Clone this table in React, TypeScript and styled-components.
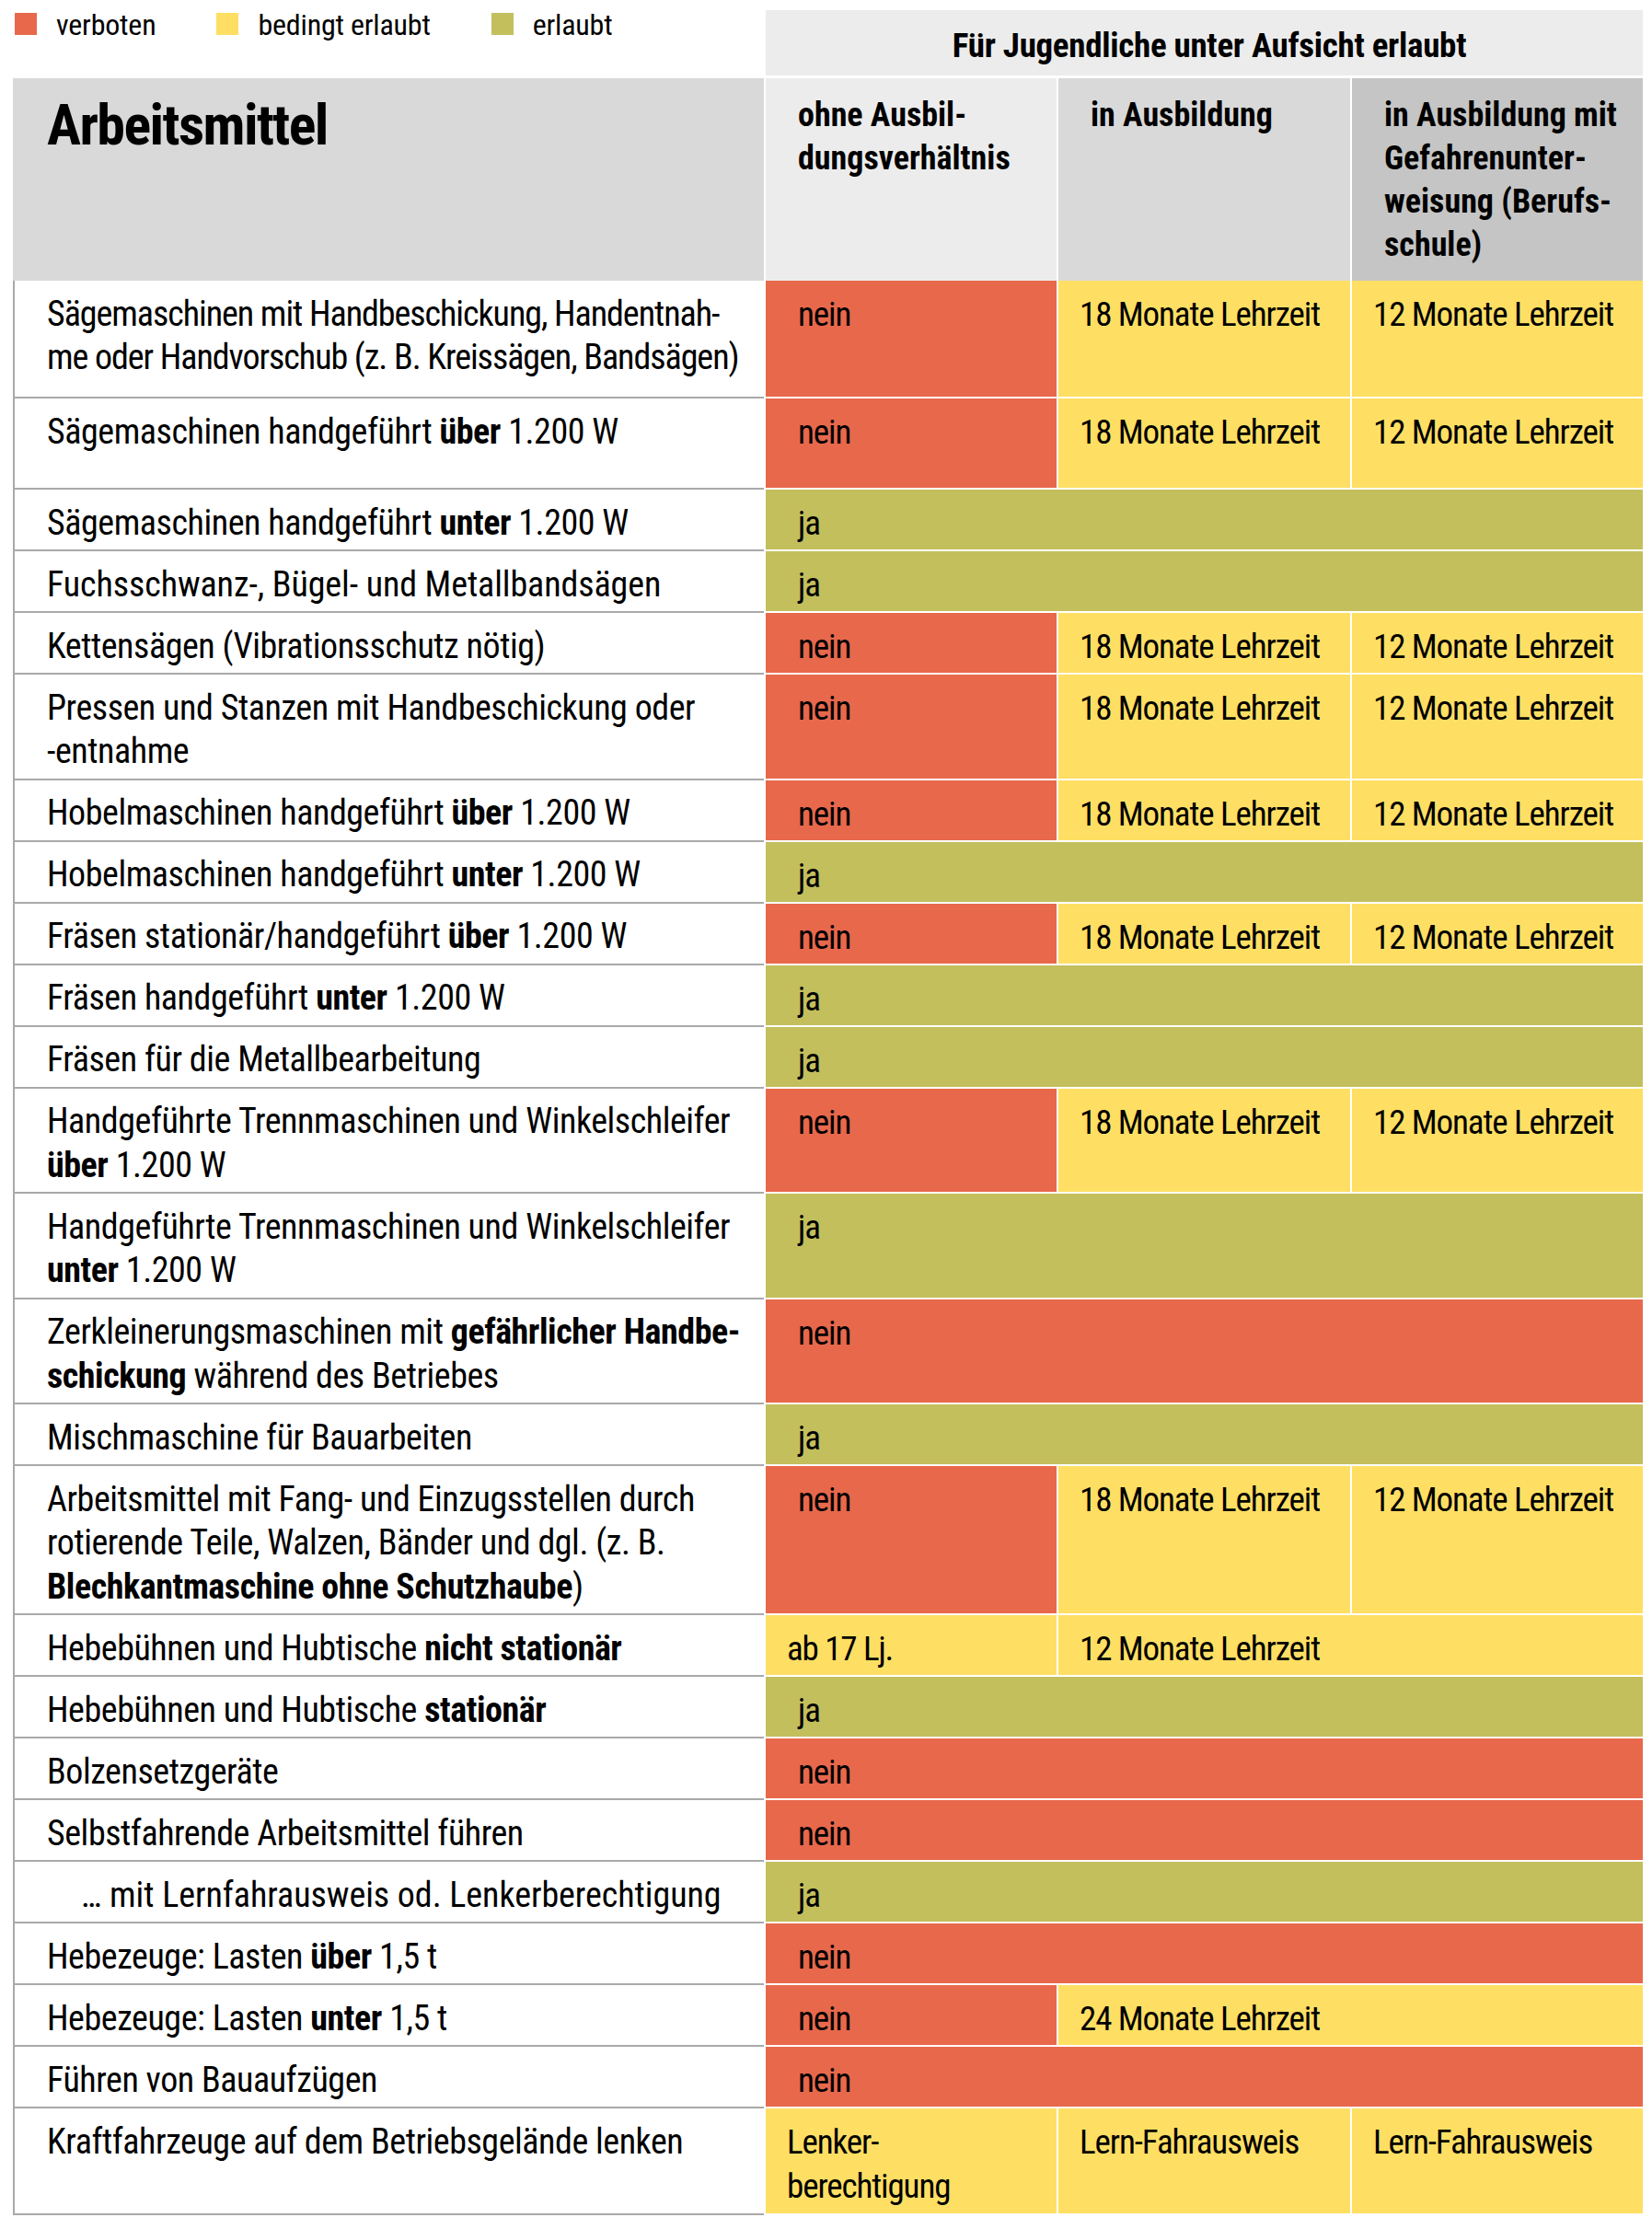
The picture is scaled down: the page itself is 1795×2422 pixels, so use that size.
import React from "react";
import styled, { createGlobalStyle } from "styled-components";

type Tone = "red" | "yellow" | "green";

const TONES: Record<Tone, string> = {
  red: "#E8684C",
  yellow: "#FFDF63",
  green: "#C3BF5D",
};

const FONT = `Roboto, "Roboto Condensed", "Liberation Sans", Arial, sans-serif`;

const GlobalStyle = createGlobalStyle`
  html, body { margin: 0; padding: 0; background: #ffffff; }
  body { font-family: ${FONT}; font-stretch: 75%; color: #000000; }
  * { box-sizing: border-box; }
`;

const COLS = "816px 316px 317px 316px";

const Page = styled.div`
  width: 1795px;
  padding: 11px 0 0 14px;
`;

const TopBar = styled.div`
  display: grid;
  grid-template-columns: ${COLS};
  column-gap: 2px;
  height: 71px;
`;

const Legend = styled.div`
  display: flex;
  align-items: flex-start;
  gap: 66px;
  padding: 0 0 0 2px;
`;

const LegendItem = styled.div`
  display: flex;
  align-items: baseline;
  gap: 21px;
  font-size: 32px;
  letter-spacing: -0.2px;
  line-height: 1;
`;

const Swatch = styled.span<{ $tone: Tone }>`
  flex: none;
  width: 24px;
  height: 24px;
  background: ${(p) => TONES[p.$tone]};
`;

const GroupHead = styled.div`
  grid-column: 2 / span 3;
  background: #ececec;
  text-align: center;
  padding: 17px 0 0 11px;
  font-size: 37px;
  letter-spacing: -0.3px;
  line-height: 43px;
  font-weight: 700;
`;

const HeadRow = styled.div`
  display: grid;
  grid-template-columns: ${COLS};
  column-gap: 2px;
  height: 220px;
  margin-top: 3px;
`;

const TitleCell = styled.div`
  background: #d9d9d9;
  padding: 15px 0 0 37px;
`;

const Title = styled.h1`
  margin: 0;
  font-size: 62px;
  letter-spacing: -1.6px;
  line-height: 72px;
  font-weight: 700;
`;

const HeadCell = styled.div<{ $shade: string }>`
  background: ${(p) => p.$shade};
  padding: 17px 12px 0 35px;
  font-size: 36px;
  line-height: 47px;
  font-weight: 700;
  white-space: nowrap;
`;

const Row = styled.div<{ $h?: number }>`
  display: grid;
  grid-template-columns: ${COLS};
  column-gap: 2px;
  min-height: ${(p) => (p.$h ? `${p.$h}px` : "0")};
`;

const Label = styled.div<{ $indent?: boolean; $track?: number }>`
  border-left: 2px solid #a9a9a9;
  border-bottom: 2px solid #a9a9a9;
  padding: 12.5px 12px 5px ${(p) => (p.$indent ? 72 : 35)}px;
  font-size: 38px;
  letter-spacing: ${(p) => p.$track ?? -0.45}px;
  line-height: 47.5px;
  white-space: nowrap;
  b {
    font-weight: 700;
  }
`;

const Cell = styled.div<{ $tone: Tone; $span: number; $inset: boolean }>`
  grid-column: span ${(p) => p.$span};
  background: ${(p) => TONES[p.$tone]};
  margin-bottom: 2px;
  padding: 13px 12px 3px ${(p) => (p.$inset ? 35 : 23)}px;
  font-size: 37px;
  letter-spacing: -1.1px;
  line-height: 47.5px;
  white-space: nowrap;
`;

type CellData = { t: React.ReactNode; tone: Tone; span?: number; inset?: boolean };
type RowData = {
  label: React.ReactNode;
  cells: CellData[];
  h?: number;
  indent?: boolean;
  track?: number;
};

const nein = (span = 1): CellData => ({ t: "nein", tone: "red", span, inset: true });
const ja = (): CellData => ({ t: "ja", tone: "green", span: 3, inset: true });
const m18: CellData = { t: "18 Monate Lehrzeit", tone: "yellow" };
const m12: CellData = { t: "12 Monate Lehrzeit", tone: "yellow" };
const std = [nein(), m18, m12];

const rows: RowData[] = [
  {
    label: (
      <>
        Sägemaschinen mit Handbeschickung, Handentnah-
        <br />
        me oder Handvorschub (z. B. Kreissägen, Bandsägen)
      </>
    ),
    cells: std,
    h: 128,
    track: -1.05,
  },
  { label: <>Sägemaschinen handgeführt <b>über</b> 1.200 W</>, cells: std, h: 99 },
  { label: <>Sägemaschinen handgeführt <b>unter</b> 1.200 W</>, cells: [ja()] },
  { label: <>Fuchsschwanz-, Bügel- und Metallbandsägen</>, cells: [ja()], track: -0.1 },
  { label: <>Kettensägen (Vibrationsschutz nötig)</>, cells: std },
  {
    label: (
      <>
        Pressen und Stanzen mit Handbeschickung oder
        <br />
        -entnahme
      </>
    ),
    cells: std,
  },
  { label: <>Hobelmaschinen handgeführt <b>über</b> 1.200 W</>, cells: std },
  { label: <>Hobelmaschinen handgeführt <b>unter</b> 1.200 W</>, cells: [ja()] },
  { label: <>Fräsen stationär/handgeführt <b>über</b> 1.200 W</>, cells: std },
  { label: <>Fräsen handgeführt <b>unter</b> 1.200 W</>, cells: [ja()] },
  { label: <>Fräsen für die Metallbearbeitung</>, cells: [ja()] },
  {
    label: (
      <>
        Handgeführte Trennmaschinen und Winkelschleifer
        <br />
        <b>über</b> 1.200 W
      </>
    ),
    cells: std,
  },
  {
    label: (
      <>
        Handgeführte Trennmaschinen und Winkelschleifer
        <br />
        <b>unter</b> 1.200 W
      </>
    ),
    cells: [ja()],
  },
  {
    label: (
      <>
        Zerkleinerungsmaschinen mit <b>gefährlicher Handbe-</b>
        <br />
        <b>schickung</b> während des Betriebes
      </>
    ),
    cells: [nein(3)],
  },
  { label: <>Mischmaschine für Bauarbeiten</>, cells: [ja()] },
  {
    label: (
      <>
        Arbeitsmittel mit Fang- und Einzugsstellen durch
        <br />
        rotierende Teile, Walzen, Bänder und dgl. (z. B.
        <br />
        <b>Blechkantmaschine ohne Schutzhaube</b>)
      </>
    ),
    cells: std,
  },
  {
    label: <>Hebebühnen und Hubtische <b>nicht stationär</b></>,
    cells: [
      { t: "ab 17 Lj.", tone: "yellow" },
      { t: "12 Monate Lehrzeit", tone: "yellow", span: 2 },
    ],
  },
  { label: <>Hebebühnen und Hubtische <b>stationär</b></>, cells: [ja()] },
  { label: <>Bolzensetzgeräte</>, cells: [nein(3)] },
  { label: <>Selbstfahrende Arbeitsmittel führen</>, cells: [nein(3)] },
  {
    label: <>… mit Lernfahrausweis od. Lenkerberechtigung</>,
    cells: [ja()],
    indent: true,
    track: -0.05,
  },
  { label: <>Hebezeuge: Lasten <b>über</b> 1,5 t</>, cells: [nein(3)] },
  {
    label: <>Hebezeuge: Lasten <b>unter</b> 1,5 t</>,
    cells: [nein(), { t: "24 Monate Lehrzeit", tone: "yellow", span: 2 }],
  },
  { label: <>Führen von Bauaufzügen</>, cells: [nein(3)] },
  {
    label: <>Kraftfahrzeuge auf dem Betriebsgelände lenken</>,
    cells: [
      {
        t: (
          <>
            Lenker-
            <br />
            berechtigung
          </>
        ),
        tone: "yellow",
      },
      { t: "Lern-Fahrausweis", tone: "yellow" },
      { t: "Lern-Fahrausweis", tone: "yellow" },
    ],
    h: 116,
  },
];

export default function App() {
  return (
    <Page>
      <GlobalStyle />
      <TopBar>
        <Legend>
          <LegendItem>
            <Swatch $tone="red" />
            verboten
          </LegendItem>
          <LegendItem>
            <Swatch $tone="yellow" />
            bedingt erlaubt
          </LegendItem>
          <LegendItem>
            <Swatch $tone="green" />
            erlaubt
          </LegendItem>
        </Legend>
        <GroupHead>Für Jugendliche unter Aufsicht erlaubt</GroupHead>
      </TopBar>
      <HeadRow>
        <TitleCell>
          <Title>Arbeitsmittel</Title>
        </TitleCell>
        <HeadCell $shade="#ececec">
          ohne Ausbil-
          <br />
          dungsverhältnis
        </HeadCell>
        <HeadCell $shade="#d9d9d9">in Ausbildung</HeadCell>
        <HeadCell $shade="#c5c5c5">
          in Ausbildung mit
          <br />
          Gefahrenunter-
          <br />
          weisung (Berufs-
          <br />
          schule)
        </HeadCell>
      </HeadRow>
      {rows.map((r, i) => (
        <Row key={i} $h={r.h}>
          <Label $indent={r.indent} $track={r.track}>
            {r.label}
          </Label>
          {r.cells.map((c, j) => (
            <Cell key={j} $tone={c.tone} $span={c.span ?? 1} $inset={!!c.inset}>
              {c.t}
            </Cell>
          ))}
        </Row>
      ))}
    </Page>
  );
}
